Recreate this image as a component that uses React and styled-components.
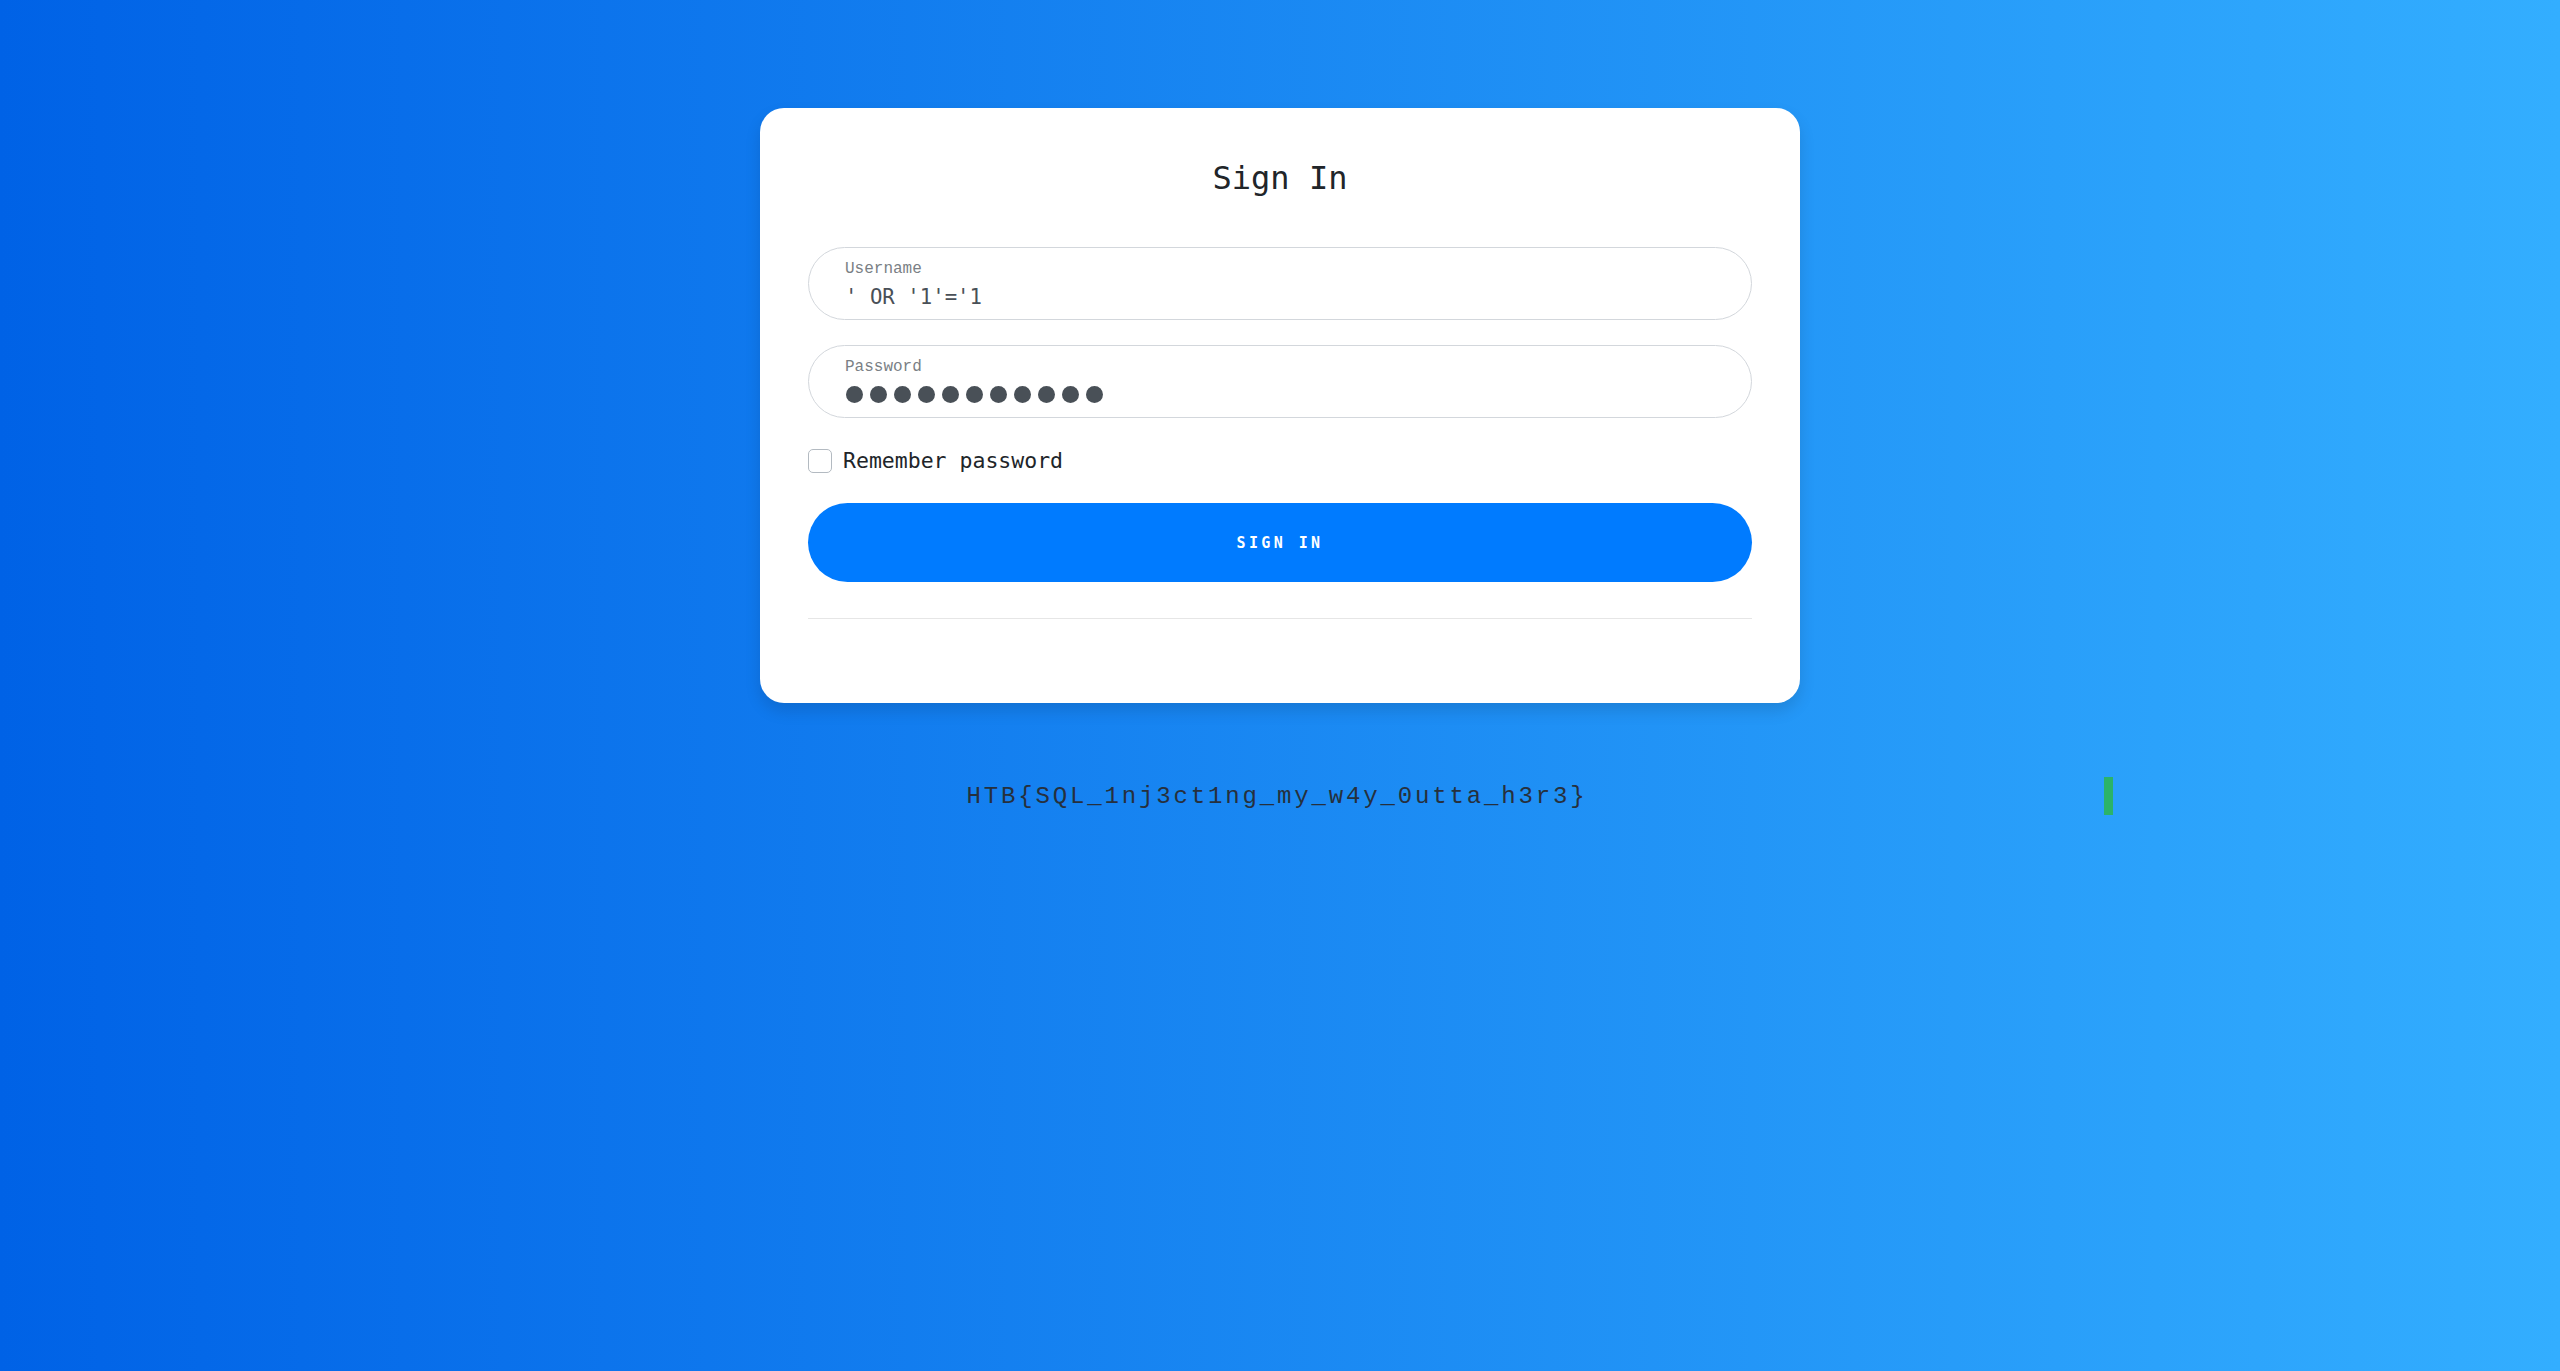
import React from "react";
import styled, { createGlobalStyle } from "styled-components";

const GlobalStyle = createGlobalStyle`
  html, body {
    margin: 0;
    padding: 0;
  }
  body {
    min-height: 100vh;
    background: linear-gradient(to right, #0062e6, #33aeff);
    font-family: "DejaVu Sans Mono", "Liberation Mono", monospace;
    color: #212529;
  }
  * {
    box-sizing: border-box;
  }
`;

const Page = styled.main`
  min-height: 100vh;
  display: flex;
  flex-direction: column;
  align-items: center;
  padding-top: 108px;
`;

const Card = styled.section`
  width: 1040px;
  background: #fff;
  border-radius: 24px;
  box-shadow: 0 8px 16px rgba(0, 0, 0, 0.12);
  padding: 51px 48px 84px;
  display: flex;
  flex-direction: column;
`;

const Title = styled.h1`
  margin: 0 0 50px;
  font-family: "DejaVu Sans Mono", monospace;
  font-weight: 400;
  font-size: 32px;
  line-height: 38px;
  text-align: center;
  color: #212529;
`;

const Field = styled.div`
  height: 73px;
  border: 1px solid #d3d7dc;
  border-radius: 37px;
  padding: 1px 36px 0;
  display: flex;
  flex-direction: column;
  justify-content: center;
  gap: 7px;
  margin-bottom: ${(p) => p.$mb || 0}px;
`;

const Label = styled.label`
  font-family: "Liberation Mono", monospace;
  font-size: 16px;
  line-height: 18px;
  color: #7a7f85;
`;

const Value = styled.div`
  font-family: "DejaVu Sans Mono", monospace;
  font-size: 20.7px;
  line-height: 24px;
  color: #495057;
`;

const Dots = styled.div`
  display: flex;
  gap: 7px;
  height: 24px;
  align-items: center;
  padding-left: 1px;
`;

const Dot = styled.span`
  width: 17px;
  height: 17px;
  border-radius: 50%;
  background: #495057;
`;

const CheckRow = styled.div`
  display: flex;
  align-items: center;
  gap: 11px;
  margin: 31px 0 30px;
`;

const Box = styled.span`
  width: 24px;
  height: 24px;
  border: 1px solid #b3bac1;
  border-radius: 5px;
  background: #fff;
`;

const CheckText = styled.span`
  font-family: "DejaVu Sans Mono", monospace;
  font-size: 21.5px;
  line-height: 24px;
  color: #212529;
`;

const Button = styled.button`
  height: 79px;
  border: none;
  border-radius: 40px;
  background: #007bff;
  color: #fff;
  font-family: "DejaVu Sans Mono", monospace;
  font-weight: 700;
  font-size: 15px;
  letter-spacing: 3.4px;
  text-transform: uppercase;
  cursor: pointer;
`;

const Divider = styled.hr`
  margin: 36px 0 0;
  border: none;
  border-top: 1px solid #e6e6e6;
  width: 100%;
`;

const FlagRow = styled.div`
  position: relative;
  width: 100%;
  margin-top: 75px;
  text-align: center;
`;

const Flag = styled.p`
  margin: 0 6px 0 0;
  font-family: "Liberation Mono", "Courier New", monospace;
  font-size: 24px;
  line-height: 38px;
  letter-spacing: 2.85px;
  color: #26303d;
`;

const Cursor = styled.span`
  position: absolute;
  top: -1px;
  left: calc(50% + 824px);
  width: 9px;
  height: 38px;
  background: #2bb36a;
`;

export default function App() {
  const dots = Array.from({ length: 11 });
  return (
    <>
      <GlobalStyle />
      <Page>
        <Card>
          <Title>Sign In</Title>
          <Field $mb={25}>
            <Label>Username</Label>
            <Value>' OR '1'='1</Value>
          </Field>
          <Field>
            <Label>Password</Label>
            <Dots>
              {dots.map((_, i) => (
                <Dot key={i} />
              ))}
            </Dots>
          </Field>
          <CheckRow>
            <Box />
            <CheckText>Remember password</CheckText>
          </CheckRow>
          <Button>Sign in</Button>
          <Divider />
        </Card>
        <FlagRow>
          <Flag>HTB{"{"}SQL_1nj3ct1ng_my_w4y_0utta_h3r3{"}"}</Flag>
          <Cursor />
        </FlagRow>
      </Page>
    </>
  );
}
